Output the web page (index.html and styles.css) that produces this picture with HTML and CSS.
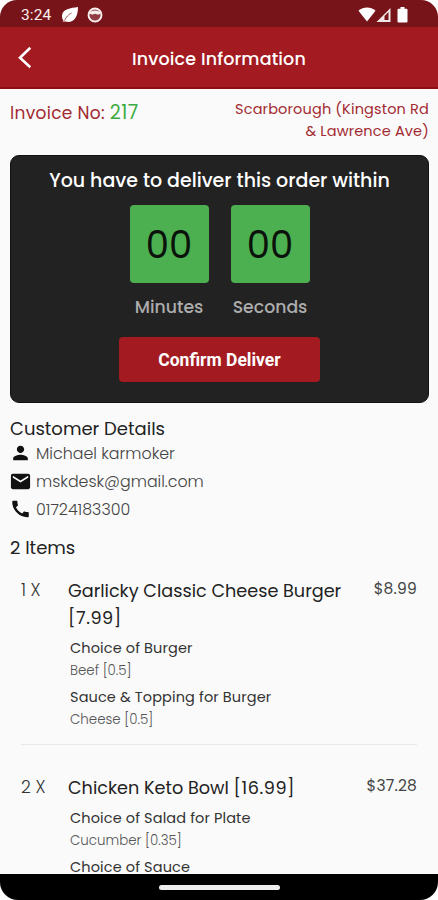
FILE: index.html
```html
<!DOCTYPE html>
<html lang="en">
<head>
<meta charset="utf-8">
<meta name="viewport" content="width=device-width, initial-scale=1">
<title>Invoice Information</title>
<link rel="stylesheet" href="styles.css">
</head>
<body>
<div class="phone">
  <header class="status">
    <span class="clock">3:24</span>
    <svg class="leaf" width="18" height="18" viewBox="0 0 18 18"><path d="M17 1C10 2 1 3 1 10c0 2 .7 3.500 1.500 4.500L1.500 15.500h2l1 0C11 17.500 17 13 17 1z" fill="#fff"/><path d="M3.500 14.500C5 11 7.500 8.500 10.500 7" stroke="#77141a" stroke-width=".7" fill="none"/></svg>
    <svg class="face" width="16" height="16" viewBox="0 0 16 16"><circle cx="8" cy="8" r="6.500" fill="#8f3d42" stroke="#f7eeee" stroke-width="1.900"/><path d="M2 6c2-3.500 10-3.500 12 0-2 2-4 1.800-6 .8C6 7.800 4 7.800 2 6z" fill="#f7eeee"/></svg>
    <span class="grow"></span>
    <svg class="wifi" width="18" height="15" viewBox="0 0 18 15"><path d="M.5 3.800C5.500-.5 12.500-.5 17.500 3.800L9 14.500z" fill="#fff"/></svg>
    <svg class="signal" width="15" height="15" viewBox="0 0 15 15"><path fill-rule="evenodd" d="M.5 15 14.500 1v14zM8.500 9V13h4V5z" fill="#f3e6e6"/></svg>
    <svg class="battery" width="11" height="16" viewBox="0 0 11 16"><path d="M3.500 0h4v1.800H9.500q1 0 1 1V14.500q0 1-1 1h-8q-1 0-1-1V2.800q0-1 1-1h2z" fill="#fff"/></svg>
  </header>
  <nav class="appbar">
    <svg class="back" width="14" height="24" viewBox="0 0 14 24"><path d="M12.300 2.800 2 12.800l10.300 9.500" fill="none" stroke="#fff" stroke-width="2.600"/></svg>
    <h1 class="title">Invoice Information</h1>
  </nav>
  <main class="content">
    <section class="invoice">
      <div class="number">Invoice No: <span class="digits">217</span></div>
      <div class="place">Scarborough (Kingston Rd<br>&amp; Lawrence Ave)</div>
    </section>
    <section class="timer">
      <h2 class="prompt">You have to deliver this order within</h2>
      <div class="units">
        <div class="unit"><div class="count">00</div><div class="label">Minutes</div></div>
        <div class="unit"><div class="count">00</div><div class="label">Seconds</div></div>
      </div>
      <button class="confirm">Confirm Deliver</button>
    </section>
    <section class="customer">
      <h3 class="heading">Customer Details</h3>
      <div class="row"><svg class="icon" width="23" height="22" viewBox="0 0 24 24"><path d="M12 12c2.210 0 4-1.790 4-4s-1.790-4-4-4-4 1.790-4 4 1.790 4 4 4zm0 2c-2.670 0-8 1.340-8 4v2h16v-2c0-2.660-5.330-4-8-4z"/></svg><span class="name">Michael karmoker</span></div>
      <div class="row"><svg class="icon" width="23" height="23" viewBox="0 0 24 24"><path d="M20 4H4c-1.100 0-1.990.9-1.990 2L2 18c0 1.100.9 2 2 2h16c1.100 0 2-.9 2-2V6c0-1.100-.9-2-2-2zm0 4-8 5-8-5V6l8 5 8-5v2z"/></svg><span class="mail">mskdesk@gmail.com</span></div>
      <div class="row"><svg class="icon" width="23" height="22" viewBox="0 0 24 24"><path d="M20.010 15.380c-1.230 0-2.420-.2-3.530-.56-.35-.12-.74-.03-1.010.24l-1.570 1.970c-2.830-1.350-5.480-3.900-6.890-6.830l1.950-1.660c.27-.28.35-.67.24-1.020-.37-1.110-.56-2.300-.56-3.530 0-.54-.45-.99-.99-.99H4.190C3.650 3 3 3.240 3 3.990 3 13.280 10.730 21 20.010 21c.71 0 .99-.63.99-1.180v-3.450c0-.54-.45-.99-.99-.99z"/></svg><span class="tel">01724183300</span></div>
    </section>
    <h3 class="heading total">2 Items</h3>
    <section class="items">
      <article class="item">
        <span class="qty">1 X</span>
        <div class="detail">
          <h4 class="dish">Garlicky Classic Cheese Burger <span class="cost">[7.99]</span></h4>
          <p class="group">Choice of Burger</p>
          <p class="option">Beef [0.5]</p>
          <p class="group">Sauce &amp; Topping for Burger</p>
          <p class="option">Cheese [0.5]</p>
        </div>
        <span class="price">$8.99</span>
      </article>
      <article class="item second">
        <span class="qty">2 X</span>
        <div class="detail">
          <h4 class="dish">Chicken Keto Bowl <span class="cost">[16.99]</span></h4>
          <p class="group">Choice of Salad for Plate</p>
          <p class="option">Cucumber [0.35]</p>
          <p class="group">Choice of Sauce</p>
        </div>
        <span class="price">$37.28</span>
      </article>
    </section>
  </main>
  <footer class="gesture"><span class="pill"></span></footer>
</div>
</body>
</html>
```
FILE: styles.css
```css
* { box-sizing: border-box; margin: 0; padding: 0; }
body { background: #fff; font-family: Poppins, Inter, "Open Sans", sans-serif; color: #222; }
h1, h2, h3, h4 { font-weight: 400; }
.phone { width: 438px; height: 900px; display: flex; flex-direction: column; overflow: hidden; border-radius: 17px 17px 18px 18px; background: #fafafa; white-space: nowrap; }

.status { height: 27px; flex: none; display: flex; align-items: center; padding: 2px 30px 0 21px; background: #77141a; color: #f7eeee; }
.clock { width: 31px; font: 400 15.5px/20px Roboto, sans-serif; letter-spacing: .1px; }
.leaf { margin-left: 9px; }
.face { margin-left: 8px; }
.grow { flex: 1; }
.battery { margin-left: 6px; }

.appbar { height: 62px; flex: none; display: grid; grid-template-columns: 14px 1fr 14px; align-items: center; padding: 0 18px; background: #a31a20; border-bottom: 2px solid #8e0e14; color: #fff; }
.title { text-align: center; font-size: 17.500px; line-height: 24px; font-weight: 500; letter-spacing: .15px; padding-top: 4px; }

.content { flex: 1; min-height: 0; overflow: hidden; padding: 9px 9px 0 10px; }
.invoice { display: flex; justify-content: space-between; height: 57px; color: #a32a32; }
.number { font-size: 17px; line-height: 31px; letter-spacing: .3px; }
.digits { color: #3cac40; font-size: 19px; letter-spacing: .6px; line-height: 20px; }
.place { text-align: right; font-size: 14.500px; line-height: 22px; letter-spacing: .15px; }

.timer { height: 248px; border-radius: 9px; background: #222; border: 1px solid #111; display: flex; flex-direction: column; align-items: center; padding-top: 12px; }
.prompt { font-size: 19px; line-height: 26px; font-weight: 500; color: #fff; }
.units { display: flex; gap: 22px; margin: 11px 0 0; }
.unit { width: 79px; display: flex; flex-direction: column; align-items: center; }
.count { width: 79px; height: 78px; border-radius: 4px; background: #4caf50; color: #0b120b; font-size: 37px; line-height: 80px; text-align: center; }
.label { margin-top: 12px; font-size: 17.300px; line-height: 24px; font-weight: 500; color: #adadad; }
.confirm { width: 201px; height: 45px; margin-top: 18px; padding-top: 1px; border: 0; border-radius: 4px; background: #a31a20; color: #fff; font: 700 17.500px/45px Roboto, sans-serif; }

.customer { margin-top: 13px; }
.heading { font-size: 18px; line-height: 26px; color: #222; }
.row { display: flex; align-items: center; height: 28px; font-size: 15.850px; font-weight: 300; color: #444; }
.row:first-of-type { margin-top: -3px; }
.icon { margin: 0 4px 0 -1px; fill: #111; }
.total { margin-top: 12px; }

.items { padding: 0 12px 0 11px; }
.item { display: grid; grid-template-columns: 47px 1fr auto; padding-top: 16px; height: 184px; border-bottom: 1px solid #e8e8e8; }
.second { border: 0; padding-top: 29px; }
.qty { font-size: 17px; font-weight: 300; line-height: 27px; color: #333; }
.dish { white-space: normal; font-size: 17.650px; line-height: 27px; color: #222; }
.cost { letter-spacing: .55px; }
.group { padding-left: 2px; font-size: 14.500px; line-height: 26px; letter-spacing: .12px; color: #333; }
.dish + .group { margin-top: 4px; }
.option { padding-left: 2px; font-size: 13.400px; line-height: 20px; font-weight: 300; color: #555; }
.option + .group { margin-top: 3px; }
.price { font-size: 15.500px; line-height: 24px; letter-spacing: .2px; color: #444; font-weight: 400; }

.gesture { height: 26px; flex: none; display: flex; justify-content: center; padding-top: 11px; background: #000; }
.pill { width: 121px; height: 5px; border-radius: 3px; background: #eee; }
```
